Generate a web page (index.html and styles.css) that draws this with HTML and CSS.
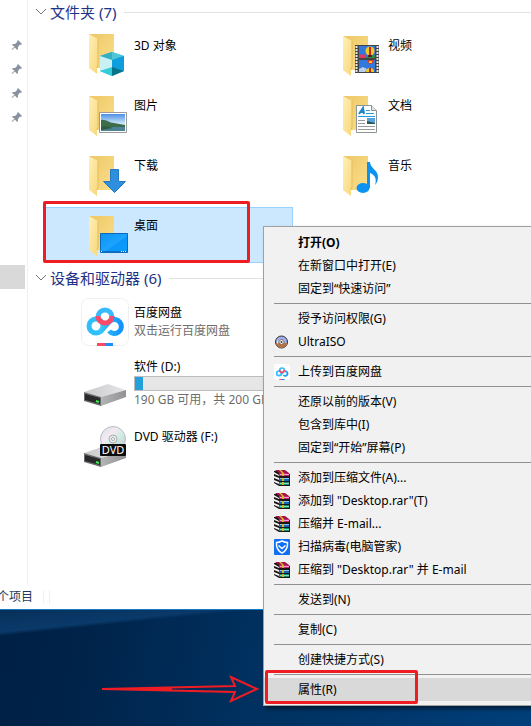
FILE: index.html
```html
<!DOCTYPE html>
<html lang="zh-CN">
<head>
  <meta charset="UTF-8" />
  <meta name="viewport" content="width=device-width, initial-scale=1.0" />
  <title>此电脑</title>
  <link rel="stylesheet" href="styles.css">
</head>
<body>
  <svg class="defs" aria-hidden="true">
    <defs>
      <linearGradient id="gBack" x1="0" y1="0" x2="1" y2="1">
        <stop offset="0" stop-color="#edc766" /><stop offset="1" stop-color="#fbdf8c" />
      </linearGradient>
      <linearGradient id="gFlap" x1="0" y1="0" x2="1" y2="1">
        <stop offset="0" stop-color="#fff0b8" /><stop offset="1" stop-color="#f8d778" />
      </linearGradient>
      <linearGradient id="gSky" x1="0" y1="0" x2="0" y2="1">
        <stop offset="0" stop-color="#4d8fe6" /><stop offset="0.6" stop-color="#d5ecf8" /><stop offset="1" stop-color="#6fa6c0" />
      </linearGradient>
      <linearGradient id="gDesk" x1="0" y1="0" x2="1" y2="1">
        <stop offset="0" stop-color="#0a93f5" /><stop offset="0.55" stop-color="#1ea4ff" /><stop offset="0.56" stop-color="#0c97fa" /><stop offset="1" stop-color="#0c9cff" />
      </linearGradient>
      <linearGradient id="gDrive" x1="0" y1="0" x2="1" y2="0">
        <stop offset="0" stop-color="#c9c9cc" /><stop offset="1" stop-color="#e6e6e8" />
      </linearGradient>
      <linearGradient id="gSide" x1="0" y1="0" x2="1" y2="0">
        <stop offset="0" stop-color="#b4b4b6" /><stop offset="1" stop-color="#929295" />
      </linearGradient>
      <linearGradient id="gCloud" x1="0" y1="0" x2="1" y2="0">
        <stop offset="0" stop-color="#35c8fb" /><stop offset="1" stop-color="#1493fc" />
      </linearGradient>
      <linearGradient id="gDisc" x1="0" y1="0" x2="1" y2="1">
        <stop offset="0" stop-color="#d9dfe2" /><stop offset="0.35" stop-color="#f4e9f3" /><stop offset="0.55" stop-color="#d3ede5" /><stop offset="1" stop-color="#c3c7ca" />
      </linearGradient>
      <symbol id="folder" viewBox="0 0 48 48">
        <path d="M8 7h25v34H8z" fill="url(#gBack)" />
        <path d="M8 7l9 5v26l-1 3v6l-8-6z" fill="url(#gFlap)" />
        <path d="M17 12v26l-1 3" fill="none" stroke="#e3bd5f" />
      </symbol>
      <symbol id="drive" viewBox="0 0 48 48">
        <path d="M3 28l24-8 18 6-25 7z" fill="url(#gDrive)" />
        <path d="M20 33l25-7v7l-25 9z" fill="url(#gSide)" />
        <path d="M3 28l17 5v9L3 37z" fill="#6c6c6e" />
        <path d="M4 30l15 4v6L4 36z" fill="#29292b" />
        <path d="M15 37l3 1" stroke="#3bf04a" stroke-width="2" />
      </symbol>
      <symbol id="cloud" viewBox="0 0 48 48">
        <g fill="none" stroke-width="5">
          <circle cx="15" cy="28" r="7" stroke="#2fc0fb" />
          <path d="M19 34l10-11a7 7 0 1 1-1 10" stroke="url(#gCloud)" />
          <path d="M17 19a7 7 0 0 1 14 0" stroke="#3bb9fd" />
          <path d="M17 18a7 7 0 0 0 14 0" stroke="#fb4a68" />
        </g>
        <path d="M16 45h8v3h-8z" fill="#fb4a68" />
        <path d="M24 45h8v3h-8z" fill="#1c8dfb" />
      </symbol>
      <symbol id="pin" viewBox="0 0 12 12">
        <path d="M7 1l4 4-1 1-1-.5L7 8v2L6 11 4 8.500 1 11 .5 10.500 3.500 7.500 1 6l1-1h2l2.500-2.500L6 2z" fill="#8a949e" />
      </symbol>
      <symbol id="books" viewBox="0 0 16 16">
        <path d="M0 1h11l5 3v12H5l-5-3z" fill="#1c1416" />
        <path d="M1 0h10l4 3H5z" fill="#a01448" />
        <path d="M5 3h10v3H5z" fill="#c02474" />
        <path d="M6 4h9v1H6z" fill="#f0a0cc" />
        <path d="M5 8h10v3H5z" fill="#1467b8" /><path d="M6 8h9v1H6z" fill="#8cc4f2" />
        <path d="M5 12h10v3H5z" fill="#0b9068" /><path d="M6 13h9v1H6z" fill="#7fe0c0" />
        <path d="M0 2l5 3v1L0 4zM0 6l5 2v2L0 8zM0 10l5 2v2l-5-2z" fill="#f4f4f4" />
        <path d="M5 0h2l3 3v3H8V3zM8 8h2v3H8zM8 12h2v3H8z" fill="#d8b828" />
      </symbol>
    </defs>
  </svg>

  <div class="window">
    <div class="panes">
      <nav class="sidebar">
        <ul class="pins">
          <li><svg class="pin"><use href="#pin" /></svg></li>
          <li><svg class="pin"><use href="#pin" /></svg></li>
          <li><svg class="pin"><use href="#pin" /></svg></li>
          <li><svg class="pin"><use href="#pin" /></svg></li>
        </ul>
        <div class="current"></div>
      </nav>

      <main class="content">
        <section>
          <h2 class="group">
            <svg class="chevron" viewBox="0 0 12 8"><path d="M1 1l5 5 5-5" /></svg>
            文件夹 (7)
          </h2>
          <div class="tiles">
            <a class="tile" href="#">
              <svg class="icon" viewBox="0 0 48 48">
                <use href="#folder" y="-2" />
                <path d="M31 23l12 4v15l-12 5-12-5V27z" fill="#20b6d2" />
                <path d="M31 23l12 4-12 4-12-4z" fill="#4fc6d6" />
                <path d="M31 23v8l-12-4z" fill="#35b0c2" />
                <path d="M19 27l12 4v8l-12 3z" fill="#c9f1f3" />
                <path d="M43 27l-12 4v8l12 3z" fill="#0d9fdd" />
                <path d="M19 42l12-4v9z" fill="#33ccd9" />
                <path d="M43 42l-12-4v9z" fill="#087489" />
              </svg>
              <span class="label">3D 对象</span>
            </a>
            <a class="tile" href="#">
              <svg class="icon" viewBox="0 0 48 48">
                <use href="#folder" />
                <path d="M20 16h24v28H20z" fill="#444" />
                <path d="M21.500 17v27M42.500 17v27" stroke="#e8e8e8" stroke-width="2" stroke-dasharray="2 1" />
                <path d="M24 17h16v12H24zM24 31h16v12H24z" fill="#3378dc" />
                <path d="M24 26l5-1 3 4h-8z" fill="#e03a62" />
                <path d="M24 40l4-2 4 2-2 3h-6z" fill="#b9cef0" />
                <path d="M31 28l9-2v3h-9z" fill="#2f8c45" />
                <circle cx="35" cy="22" r="4.500" fill="#f2cc1c" /><path d="M34 18h2v9h-2z" fill="#c22222" />
                <path d="M33 26h4v2h-4z" fill="#5a2020" />
                <path d="M32 31h7l-2 4h-3z" fill="#d43a22" /><path d="M34 32h3v2h-3z" fill="#f2cc1c" />
                <path d="M31 43a4 4 0 0 1 8 0z" fill="#f2cc1c" /><path d="M34 39h2v4h-2z" fill="#c22222" />
              </svg>
              <span class="label">视频</span>
            </a>
            <a class="tile" href="#">
              <svg class="icon" viewBox="0 0 48 48">
                <use href="#folder" />
                <path d="M18.500 23.500h27v20h-27z" fill="#fff" stroke="#9a9a9a" />
                <path d="M20 25h24v17H20z" fill="url(#gSky)" />
                <path d="M20 31c5-1 8 3 13 3l11 2v2H20z" fill="#3b6d4a" />
                <path d="M20 38h24v4H20z" fill="#4d8298" />
                <path d="M20 38c6-1 9 0 12 1l-12 2z" fill="#2f5c3f" />
              </svg>
              <span class="label">图片</span>
            </a>
            <a class="tile" href="#">
              <svg class="icon" viewBox="0 0 48 48">
                <use href="#folder" />
                <path d="M21.500 16.500h15l5 5v22h-20z" fill="#fff" stroke="#8b9496" />
                <path d="M36.500 16.500v5h5" fill="#e4e7e8" stroke="#8b9496" />
                <path d="M24 25l4-6 1 6M25 23h4" fill="none" stroke="#1d86cf" stroke-width="2" />
                <path d="M31 21.500h4M31 24.500h8M23 27.500h17" stroke="#27a0e0" />
                <path d="M23 31.500h7M23 34.500h7M23 37.500h17M23 40.500h17" stroke="#999" />
                <path d="M32 29h8v6h-8z" fill="#5aa0dc" /><path d="M32 32l8 2v1h-8z" fill="#28584c" />
              </svg>
              <span class="label">文档</span>
            </a>
            <a class="tile" href="#">
              <svg class="icon" viewBox="0 0 48 48">
                <use href="#folder" />
                <path d="M29.500 20.500h8v12h7l-11 11-11-11h7z" fill="#2f8fdf" stroke="#2578c4" />
              </svg>
              <span class="label">下载</span>
            </a>
            <a class="tile" href="#">
              <svg class="icon" viewBox="0 0 48 48">
                <use href="#folder" />
                <ellipse cx="28" cy="39" rx="6.500" ry="5" fill="#0c93f2" />
                <path d="M32 13h3c0 6 8 8 8 15 0 3-1 6-3 8 2-6 0-10-5-12v15h-3z" fill="#0c93f2" />
              </svg>
              <span class="label">音乐</span>
            </a>
            <a class="tile selected" href="#">
              <svg class="icon" viewBox="0 0 48 48">
                <use href="#folder" />
                <path d="M19.500 24.500h27v19h-27z" fill="url(#gDesk)" stroke="#0c6ab8" />
                <path d="M20 42.500h26" stroke="#0871c6" />
                <path d="M20 42.500h2M40 42.500h5" stroke="#fff" stroke-dasharray="1 1" />
              </svg>
              <span class="label">桌面</span>
            </a>
          </div>
        </section>

        <section>
          <h2 class="group">
            <svg class="chevron" viewBox="0 0 12 8"><path d="M1 1l5 5 5-5" /></svg>
            设备和驱动器 (6)
          </h2>
          <div class="devices">
            <a class="tile" href="#">
              <svg class="icon" viewBox="0 0 48 48">
                <rect x="0.500" y="0.500" width="47" height="47" rx="7" fill="#fff" stroke="#f0f0f0" />
                <use href="#cloud" />
              </svg>
              <span class="label">百度网盘<small>双击运行百度网盘</small></span>
            </a>
            <a class="tile disk" href="#">
              <svg class="icon" viewBox="0 0 48 48"><use href="#drive" /></svg>
              <span class="label">软件 (D:)
                <progress class="usage" value="5" max="100" aria-label="已用空间"></progress>
                <small>190 GB 可用，共 200 GB</small>
              </span>
            </a>
            <a class="tile" href="#">
              <svg class="icon" viewBox="0 0 48 48">
                <use href="#drive" y="3" />
                <circle cx="32" cy="17" r="12.500" fill="url(#gDisc)" stroke="#b9bdc0" />
                <circle cx="32" cy="17" r="4" fill="#e9eced" stroke="#a9adb0" />
                <circle cx="32" cy="17" r="1.500" fill="#fff" stroke="#a9adb0" />
                <rect x="19" y="22" width="26" height="12" rx="1" fill="#0c0c0c" />
                <text class="dvd" x="32" y="32" text-anchor="middle">DVD</text>
              </svg>
              <span class="label">DVD 驱动器 (F:)</span>
            </a>
          </div>
        </section>
      </main>
    </div>
    <footer class="status"><span class="count">个项目</span></footer>
  </div>

  <div class="menu">
    <button class="item default">打开(O)</button>
    <button class="item">在新窗口中打开(E)</button>
    <button class="item">固定到“快速访问”</button>
    <hr>
    <button class="item">授予访问权限(G)</button>
    <button class="item">
      <svg class="glyph" viewBox="0 0 16 16">
        <circle cx="7.500" cy="8" r="6" fill="#a3aeea" stroke="#2b2b33" />
        <path d="M2 9h11a5.500 5 0 0 1-11 0z" fill="#b8713f" />
        <path d="M3 6l3 2-3 2z" fill="#f3d6ae" />
        <path d="M7.500 5l3 3-3 3-3-3z" fill="#fff" stroke="#666" /><circle cx="7.500" cy="8" r="1" fill="#333" />
      </svg>UltraISO
    </button>
    <hr>
    <button class="item">
      <svg class="glyph" viewBox="0 0 48 48"><rect width="48" height="48" rx="8" fill="#fff" /><use href="#cloud" /></svg>上传到百度网盘
    </button>
    <hr>
    <button class="item">还原以前的版本(V)</button>
    <button class="item">包含到库中(I)</button>
    <button class="item">固定到“开始”屏幕(P)</button>
    <hr>
    <button class="item"><svg class="glyph"><use href="#books" /></svg>添加到压缩文件(A)...</button>
    <button class="item"><svg class="glyph"><use href="#books" /></svg>添加到 "Desktop.rar"(T)</button>
    <button class="item"><svg class="glyph"><use href="#books" /></svg>压缩并 E-mail...</button>
    <button class="item">
      <svg class="glyph" viewBox="0 0 16 16">
        <rect width="16" height="16" rx="1" fill="#0f6ff5" />
        <path d="M8 2c2 1 3 1.500 5.500 1.500C14 9 12 12 8 14 4 12 2 9 2.500 3.500 5 3.500 6 3 8 2z" fill="none" stroke="#fff" stroke-width="1.500" />
        <path d="M4.500 6.500L8 9.500l3.500-3" fill="none" stroke="#fff" stroke-width="1.500" />
      </svg>扫描病毒(电脑管家)
    </button>
    <button class="item"><svg class="glyph"><use href="#books" /></svg>压缩到 "Desktop.rar" 并 E-mail</button>
    <hr>
    <button class="item">发送到(N)</button>
    <hr>
    <button class="item">复制(C)</button>
    <hr>
    <button class="item">创建快捷方式(S)</button>
    <hr>
    <button class="item active">属性(R)</button>
  </div>

  <div class="mark mark-folder"></div>
  <div class="mark mark-item"></div>
  <svg class="arrow" viewBox="0 0 158 28">
    <path d="M1 14l133-3-4-9 26 12-26 12 4-9z" />
    <path d="M1 14h70" />
  </svg>
</body>
</html>
```
FILE: styles.css
```css
* {
  box-sizing: border-box;
}
body {
  margin: 0;
  min-height: 100vh;
  position: relative;
  overflow: hidden;
  font-family: "Noto Sans", "Noto Sans CJK SC", sans-serif;
  font-size: 12px;
  line-height: 18px;
  color: #000;
  background:
    linear-gradient(174deg, #07305a 0, #0a3a6a 22px, transparent 26px) 0 610px / 264px 60px no-repeat,
    linear-gradient(100deg, #001d3f 0%, #00234a 30%, #00305e 55%, #003f7a 100%);
}
.defs {
  position: absolute;
  width: 0;
  height: 0;
}
.window {
  display: flex;
  flex-direction: column;
  height: 610px;
  background: #fff;
  border-bottom: 1px solid #1878c4;
}
.panes {
  display: flex;
  flex: 1;
}
.sidebar {
  width: 28px;
  padding-top: 33px;
  border-right: 1px solid #f0f0f0;
}
.pins {
  list-style: none;
  margin: 0 0 136px;
  padding: 0;
}
.pins li {
  display: flex;
  align-items: center;
  height: 24px;
  padding-left: 11px;
}
.pin {
  width: 12px;
  height: 12px;
}
.current {
  height: 24px;
  margin-right: 2px;
  background: #d9d9d9;
}
.content {
  flex: 1;
  min-width: 0;
  padding-left: 7px;
}
.group {
  display: flex;
  align-items: center;
  gap: 3px;
  height: 24px;
  margin: 0 0 3px;
  font-size: 15px;
  font-weight: normal;
  color: #1e3287;
}
.group::after {
  content: "";
  flex: 1;
  height: 1px;
  margin-left: 5px;
  background: #e2e2e2;
}
.chevron {
  width: 12px;
  height: 8px;
  fill: none;
  stroke: #777;
}
.tiles {
  display: grid;
  grid-template-columns: 249px 249px;
  gap: 4px 5px;
  margin: 0 0 3px 9px;
}
.devices {
  display: grid;
  grid-template-columns: 249px;
  gap: 4px;
  margin: 6px 0 0 9px;
}
.tile {
  display: flex;
  gap: 5px;
  height: 56px;
  padding: 2px 5px 2px 37px;
  color: #000;
  text-decoration: none;
}
.selected {
  background: #cce8ff;
  box-shadow: inset 0 0 0 1px #99d1ff;
}
.icon {
  flex: none;
  width: 48px;
  height: 48px;
}
.label {
  flex: 1;
  padding-top: 8px;
  white-space: nowrap;
}
.label small {
  display: block;
  font-size: 12px;
  color: #6d6d6d;
}
.devices .label {
  padding-top: 6px;
}
.disk {
  height: 60px;
  padding-top: 8px;
}
.disk .label {
  margin-top: -12px;
}
.usage {
  display: block;
  width: 100%;
  height: 15px;
  border: 1px solid #bcbcbc;
  appearance: none;
  background: #e6e6e6;
}
.usage::-webkit-progress-bar {
  background: #e6e6e6;
}
.usage::-webkit-progress-value {
  background: #26a0da;
}
.dvd {
  font: 11px "Noto Sans", sans-serif;
  fill: #fff;
}
.status {
  display: flex;
  align-items: center;
  height: 24px;
}
.count {
  display: flex;
  justify-content: flex-end;
  width: 33px;
  overflow: hidden;
  white-space: nowrap;
  color: #1e395b;
}
.status::after {
  content: "";
  width: 5px;
  height: 14px;
  margin-left: 10px;
  border: solid #f0f0f0;
  border-width: 0 1px;
}

/* context menu */
.menu {
  position: absolute;
  top: 226px;
  left: 263px;
  right: 0;
  padding: 4px 0;
  background: #f1f1f1;
  border: 1px solid #a0a0a0;
  border-right: 0;
  box-shadow: 3px 3px 4px rgba(0, 0, 0, 0.5);
}
.menu hr {
  height: 1px;
  margin: 3px 0 3px 10px;
  border: 0;
  background: #919191;
}
.item {
  display: flex;
  align-items: center;
  width: 100%;
  height: 23px;
  padding: 0 0 0 34px;
  border: 0;
  background: none;
  font: inherit;
  color: #000;
  text-align: left;
  white-space: nowrap;
}
.item.default {
  font-weight: bold;
}
.item.active {
  background: #d9d9d9;
}
.glyph {
  flex: none;
  width: 16px;
  height: 16px;
  margin: 0 8px 0 -24px;
}

/* red annotations */
.mark {
  position: absolute;
  border: 3px solid #f01c24;
  border-radius: 2px;
}
.mark-folder {
  top: 201px;
  left: 43px;
  width: 207px;
  height: 62px;
}
.mark-item {
  top: 670px;
  left: 265px;
  width: 153px;
  height: 34px;
}
.arrow {
  position: absolute;
  top: 675px;
  left: 101px;
  width: 158px;
  height: 28px;
  fill: none;
  stroke: #f01c24;
  stroke-width: 2;
}
```
